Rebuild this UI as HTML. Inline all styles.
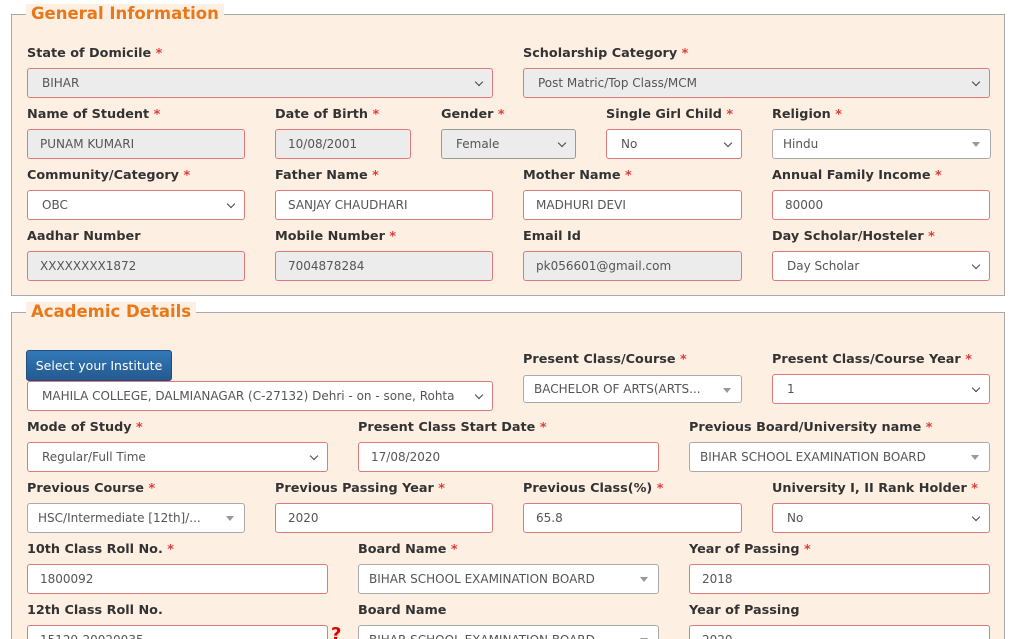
<!DOCTYPE html>
<html><head><meta charset="utf-8"><style>
*{box-sizing:border-box;margin:0;padding:0}
html,body{width:1017px;height:639px;overflow:hidden}
body{background:#fff;font-family:"DejaVu Sans",Verdana,sans-serif;position:relative}
.fs{position:absolute;border:1px solid #a9a9a9;background:#fdf0e3}
.lg{position:absolute;background:#fdf0e3;color:#e8781a;font-weight:bold;font-size:16.5px;padding:0 5px;line-height:20px}
.l{position:absolute;font-weight:bold;font-size:12.8px;color:#333;line-height:16px;white-space:nowrap}
.l b{color:#e53935}
.b{position:absolute;height:30px;border:1px solid #e07a7a;border-radius:3px;background:#fff;font-size:12px;color:#555;line-height:28px;padding-left:12px;white-space:nowrap;overflow:hidden}
.g{background:#ececec}
.s2{border-color:#aaa;padding-left:10px}
.ch{padding-left:14px}
.ch::after{content:"";position:absolute;right:10px;top:10px;width:5px;height:5px;border-right:1.5px solid #444;border-bottom:1.5px solid #444;transform:rotate(45deg)}
.tr::after{content:"";position:absolute;right:10px;top:12px;border-left:4px solid transparent;border-right:4px solid transparent;border-top:5px solid #999}
.btn{position:absolute;left:26px;top:350px;width:146px;height:31px;border-radius:3px;background:linear-gradient(#3379b7,#24598f);border:1px solid #1f4e7e;color:#fff;font-size:12.5px;line-height:29px;text-align:center}
</style></head><body>
<div class="fs" style="left:11px;top:14px;width:994px;height:282px"></div>
<div class="lg" style="left:26px;top:4px">General Information</div>
<div class="fs" style="left:11px;top:312px;width:994px;height:340px"></div>
<div class="lg" style="left:26px;top:302px">Academic Details</div>

<div class="l" style="left:27px;top:46px">State of Domicile <b>*</b></div>
<div class="l" style="left:523px;top:46px">Scholarship Category <b>*</b></div>
<div class="b g ch" style="left:27px;top:68px;width:466px">BIHAR</div>
<div class="b g ch" style="left:523px;top:68px;width:467px">Post Matric/Top Class/MCM</div>

<div class="l" style="left:27px;top:107px">Name of Student <b>*</b></div>
<div class="l" style="left:275px;top:107px">Date of Birth <b>*</b></div>
<div class="l" style="left:441px;top:107px">Gender <b>*</b></div>
<div class="l" style="left:606px;top:107px">Single Girl Child <b>*</b></div>
<div class="l" style="left:772px;top:107px">Religion <b>*</b></div>
<div class="b g" style="left:27px;top:129px;width:218px">PUNAM KUMARI</div>
<div class="b g" style="left:275px;top:129px;width:136px">10/08/2001</div>
<div class="b g ch" style="left:441px;top:129px;width:135px;border-color:#999">Female</div>
<div class="b ch" style="left:606px;top:129px;width:136px">No</div>
<div class="b s2 tr" style="left:772px;top:129px;width:219px">Hindu</div>

<div class="l" style="left:27px;top:168px">Community/Category <b>*</b></div>
<div class="l" style="left:275px;top:168px">Father Name <b>*</b></div>
<div class="l" style="left:523px;top:168px">Mother Name <b>*</b></div>
<div class="l" style="left:772px;top:168px">Annual Family Income <b>*</b></div>
<div class="b ch" style="left:27px;top:190px;width:218px">OBC</div>
<div class="b" style="left:275px;top:190px;width:218px">SANJAY CHAUDHARI</div>
<div class="b" style="left:523px;top:190px;width:219px">MADHURI DEVI</div>
<div class="b" style="left:772px;top:190px;width:218px">80000</div>

<div class="l" style="left:27px;top:229px">Aadhar Number</div>
<div class="l" style="left:275px;top:229px">Mobile Number <b>*</b></div>
<div class="l" style="left:523px;top:229px">Email Id</div>
<div class="l" style="left:772px;top:229px">Day Scholar/Hosteler <b>*</b></div>
<div class="b g" style="left:27px;top:251px;width:218px">XXXXXXXX1872</div>
<div class="b g" style="left:275px;top:251px;width:218px">7004878284</div>
<div class="b g" style="left:523px;top:251px;width:219px">pk056601@gmail.com</div>
<div class="b ch" style="left:772px;top:251px;width:218px">Day Scholar</div>

<div class="btn">Select your Institute</div>
<div class="b ch" style="left:27px;top:381px;width:466px;padding-right:30px">MAHILA COLLEGE, DALMIANAGAR (C-27132) Dehri - on - sone, Rohta</div>
<div class="l" style="left:523px;top:352px">Present Class/Course <b>*</b></div>
<div class="l" style="left:772px;top:352px">Present Class/Course Year <b>*</b></div>
<div class="b s2 tr" style="left:523px;top:375px;width:219px;height:28px;line-height:26px">BACHELOR OF ARTS(ARTS...</div>
<div class="b ch" style="left:772px;top:374px;width:218px">1</div>

<div class="l" style="left:27px;top:420px">Mode of Study <b>*</b></div>
<div class="l" style="left:358px;top:420px">Present Class Start Date <b>*</b></div>
<div class="l" style="left:689px;top:420px">Previous Board/University name <b>*</b></div>
<div class="b ch" style="left:27px;top:442px;width:301px">Regular/Full Time</div>
<div class="b" style="left:358px;top:442px;width:301px">17/08/2020</div>
<div class="b s2 tr" style="left:689px;top:442px;width:301px">BIHAR SCHOOL EXAMINATION BOARD</div>

<div class="l" style="left:27px;top:481px">Previous Course <b>*</b></div>
<div class="l" style="left:275px;top:481px">Previous Passing Year <b>*</b></div>
<div class="l" style="left:523px;top:481px">Previous Class(%) <b>*</b></div>
<div class="l" style="left:772px;top:481px">University I, II Rank Holder <b>*</b></div>
<div class="b s2 tr" style="left:27px;top:503px;width:218px;padding-right:28px">HSC/Intermediate [12th]/...</div>
<div class="b" style="left:275px;top:503px;width:218px">2020</div>
<div class="b" style="left:523px;top:503px;width:219px">65.8</div>
<div class="b ch" style="left:772px;top:503px;width:218px">No</div>

<div class="l" style="left:27px;top:542px">10th Class Roll No. <b>*</b></div>
<div class="l" style="left:358px;top:542px">Board Name <b>*</b></div>
<div class="l" style="left:689px;top:542px">Year of Passing <b>*</b></div>
<div class="b" style="left:27px;top:564px;width:301px">1800092</div>
<div class="b s2 tr" style="left:358px;top:564px;width:301px">BIHAR SCHOOL EXAMINATION BOARD</div>
<div class="b" style="left:689px;top:564px;width:301px">2018</div>

<div class="l" style="left:27px;top:603px">12th Class Roll No.</div>
<div class="l" style="left:358px;top:603px">Board Name</div>
<div class="l" style="left:689px;top:603px">Year of Passing</div>
<div class="b" style="left:27px;top:625px;width:301px">15129-20020035</div>
<div style="position:absolute;left:331px;top:624px;color:#d00;font-weight:bold;font-size:18px">?</div>
<div class="b s2 tr" style="left:358px;top:625px;width:301px">BIHAR SCHOOL EXAMINATION BOARD</div>
<div class="b" style="left:689px;top:625px;width:301px">2020</div>
</body></html>
